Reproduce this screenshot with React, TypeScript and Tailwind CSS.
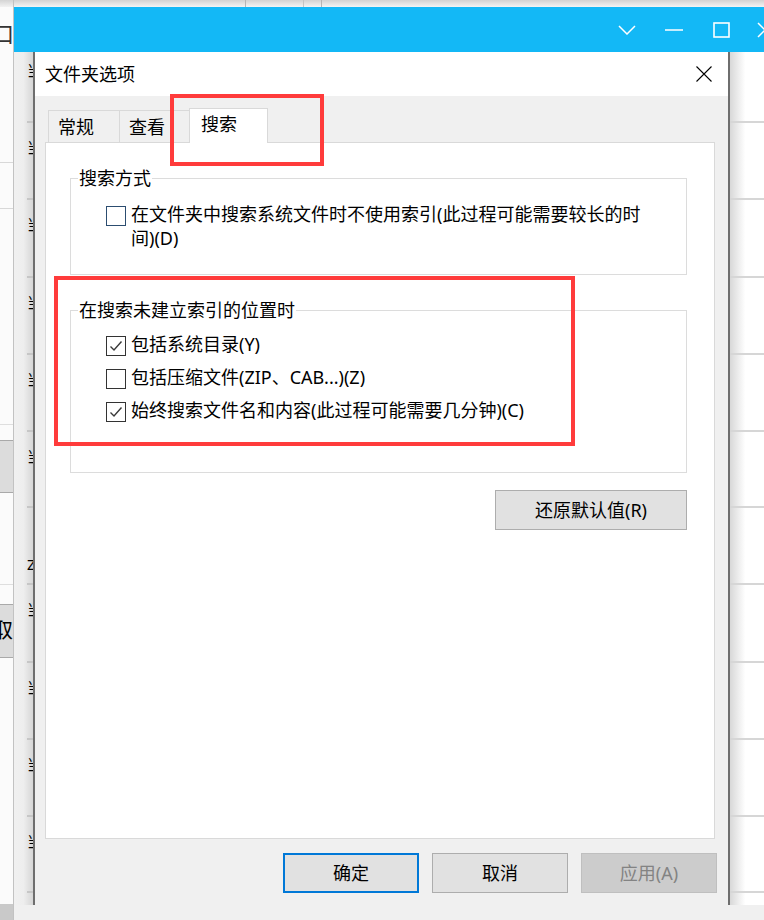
import React from "react";

// rows of the list window behind the dialog (first row is cut by the dialog title)
const listRows = [
  { h: "h-[71px]", text: "当", pad: "pt-[6px]" },
  { h: "h-[77px]", text: "当", pad: "pt-[12px]" },
  { h: "h-[78px]", text: "当", pad: "pt-[12px]" },
  { h: "h-[77px]", text: "当", pad: "pt-[12px]" },
  { h: "h-[77px]", text: "当", pad: "pt-[12px]" },
  { h: "h-[76px]", text: "当", pad: "pt-[12px]" },
  { h: "h-[77px]", text: "Z", pad: "pt-[44px]" },
  { h: "h-[78px]", text: "当", pad: "pt-[12px]" },
  { h: "h-[77px]", text: "当", pad: "pt-[12px]" },
  { h: "h-[77px]", text: "当", pad: "pt-[12px]" },
  { h: "h-[76px]", text: "当", pad: "pt-[12px]" },
];

const Checkbox: React.FC<{ checked?: boolean; focus?: boolean }> = ({ checked, focus }) => (
  <span
    className={`mt-[4px] flex h-[20px] w-[20px] shrink-0 items-center justify-center border bg-white ${
      focus ? "border-[#2c4d70]" : "border-[#333333]"
    }`}
  >
    {checked && (
      <svg width="18" height="18" viewBox="0 0 18 18">
        <path d="M3.5 9.5 L7 13 L14.5 4.5" fill="none" stroke="#3a3a3a" strokeWidth="1.4" />
      </svg>
    )}
  </span>
);

const CheckRow: React.FC<{ checked?: boolean; focus?: boolean; children: React.ReactNode }> = ({
  checked,
  focus,
  children,
}) => (
  <div className="ml-[28px] flex items-start gap-[5px]">
    <Checkbox checked={checked} focus={focus} />
    <span className="leading-[24px]">{children}</span>
  </div>
);

const LeftWindow = () => (
  <div className="flex h-[920px] w-[14px] shrink-0 flex-col overflow-hidden border-r border-[#c2c2c2] bg-[#fbfbfb]">
    <div className="h-[7px] bg-linear-to-b from-[#d4d4d4] to-[#f2f2f2]" />
    <div className="h-[13px]" />
    <div className="-ml-[8px] h-[26px] text-[22px] leading-[26px] text-[#333]">口</div>
    <div className="h-[117px] border-b border-[#d8d8d8]" />
    <div className="h-[46px] border-b border-[#d8d8d8]" />
    <div className="h-[216px] border-b border-[#dedede]" />
    <div className="h-[15px]" />
    <div className="h-[53px] border-y border-[#a9a9a9] bg-[#dcdcdc]" />
    <div className="h-[92px] border-b border-[#dedede]" />
    <div className="h-[19px]" />
    <div className="-ml-[8px] h-[54px] overflow-hidden border-y border-[#a9a9a9] bg-[#dcdcdc] pt-[11px] text-[21px] leading-[26px] text-black">
      取
    </div>
    <div className="h-[246px]" />
    <div className="flex-1 bg-[#c9c9c9]" />
  </div>
);

const TitleBar = () => (
  <div className="flex h-[45px] shrink-0 items-center overflow-hidden bg-[#13b8f6] pl-[604px]">
    <svg width="18" height="10" viewBox="0 0 18 10" className="shrink-0">
      <path d="M1 1 L9 9 L17 1" fill="none" stroke="white" strokeWidth="1.5" />
    </svg>
    <svg width="18" height="4" viewBox="0 0 18 4" className="ml-[29px] shrink-0">
      <path d="M0 2 H18" stroke="white" strokeWidth="1.5" />
    </svg>
    <svg width="17" height="16" viewBox="0 0 17 16" className="ml-[30px] shrink-0">
      <rect x="1" y="1" width="15" height="14" fill="none" stroke="white" strokeWidth="1.6" />
    </svg>
    <svg width="16" height="16" viewBox="0 0 16 16" className="ml-[27px] shrink-0">
      <path d="M1 1 L15 15 M15 1 L1 15" stroke="white" strokeWidth="1.5" />
    </svg>
  </div>
);

const ListLeft = () => (
  <div className="flex w-[19px] shrink-0 flex-col overflow-hidden bg-linear-to-r from-[#f0f0f0] via-[#eeeeee] to-[#d6d6d6]">
    {listRows.map((row, i) => (
      <div key={i} className={`${row.h} ${row.pad} relative shrink-0 border-b border-transparent`}>
        <div className="ml-[13px] w-[20px] text-[15px] leading-[24px] text-black">{row.text}</div>
        <div className="absolute right-0 bottom-[-1px] h-[2px] w-[6px] bg-[#c6c6c6]" />
      </div>
    ))}
  </div>
);

const ListRight = () => (
  <div className="flex w-[34px] shrink-0 flex-col bg-linear-to-r from-[#d8d8d8] via-white via-45% to-white">
    {listRows.map((row, i) => (
      <div key={i} className={`${row.h} shrink-0 border-b-2 border-[#d6d6d6]`} />
    ))}
  </div>
);

const Tab: React.FC<{ label: string; active?: boolean; width: string; first?: boolean }> = ({
  label,
  active,
  width,
  first,
}) =>
  active ? (
    <div
      className={`${width} relative z-10 -mb-px -ml-px h-[35px] border border-b-0 border-[#d9d9d9] bg-white pt-[3px] pl-[11px] leading-[24px]`}
    >
      {label}
    </div>
  ) : (
    <div
      className={`${width} ${first ? "" : "-ml-px"} h-[32px] border border-b-0 border-[#d9d9d9] bg-[#f0f0f0] pt-[4px] pl-[9px] leading-[24px]`}
    >
      {label}
    </div>
  );

const Button: React.FC<{ label: string; kind?: "default" | "normal" | "disabled"; width: string }> = ({
  label,
  kind = "normal",
  width,
}) => {
  const styles = {
    default: "border-2 border-[#0078d7] bg-[#e1e1e1] text-black",
    normal: "border border-[#adadad] bg-[#e1e1e1] text-black",
    disabled: "border border-[#bfbfbf] bg-[#cccccc] text-[#838383]",
  };
  return (
    <div className={`${width} ${styles[kind]} flex h-[40px] shrink-0 items-center justify-center leading-[24px]`}>
      {label}
    </div>
  );
};

const FolderOptionsDialog = () => (
  <div className="flex w-[693px] shrink-0 flex-col bg-[#f0f0f0]">
    {/* title */}
    <div className="flex h-[44px] shrink-0 items-center justify-between bg-white pr-[16px] pl-[10px]">
      <span className="leading-[24px]">文件夹选项</span>
      <svg width="16" height="16" viewBox="0 0 16 16">
        <path d="M0.5 0.5 L15.5 15.5 M15.5 0.5 L0.5 15.5" stroke="#000" strokeWidth="1.1" />
      </svg>
    </div>

    {/* tabs */}
    <div className="flex h-[34px] items-end pt-[12px] pl-[13px] box-content">
      <Tab label="常规" width="w-[72px]" first />
      <Tab label="查看" width="w-[71px]" />
      <Tab label="搜索" width="w-[79px]" active />
    </div>

    {/* tab panel */}
    <div className="ml-[10px] h-[697px] w-[670px] border border-[#d9d9d9] bg-white pt-[23px] pl-[24px]">
      <fieldset className="w-[617px] border border-[#dcdcdc] pt-[12px] pb-[24px] pl-[7px]">
        <legend className="px-[1px] leading-[24px]">搜索方式</legend>
        <CheckRow focus>
          在文件夹中搜索系统文件时不使用索引(此过程可能需要较长的时
          <br />
          间)(D)
        </CheckRow>
      </fieldset>

      <fieldset className="mt-[23px] w-[617px] border border-[#dcdcdc] pt-[10px] pb-[50px] pl-[7px]">
        <legend className="px-[1px] leading-[24px]">在搜索未建立索引的位置时</legend>
        <div className="flex flex-col gap-[9px]">
          <CheckRow checked>包括系统目录(Y)</CheckRow>
          <CheckRow>包括压缩文件(ZIP、CAB...)(Z)</CheckRow>
          <CheckRow checked>始终搜索文件名和内容(此过程可能需要几分钟)(C)</CheckRow>
        </div>
      </fieldset>

      <div className="mt-[17px] flex w-[617px] justify-end">
        <Button label="还原默认值(R)" width="w-[192px]" />
      </div>
    </div>

    {/* dialog buttons */}
    <div className="mt-[14px] flex justify-end gap-[13px] pr-[11px]">
      <Button label="确定" kind="default" width="w-[136px]" />
      <Button label="取消" width="w-[136px]" />
      <Button label="应用(A)" kind="disabled" width="w-[136px]" />
    </div>
  </div>
);

const App: React.FC = () => {
  return (
    <div className="relative flex h-[920px] w-[764px] overflow-hidden bg-[#f0f0f0] font-['Noto_Sans','Noto_Sans_CJK_SC',sans-serif] text-[18px] text-black">
      <LeftWindow />
      <div className="flex w-[750px] flex-col">
        <div className="flex h-[7px] shrink-0 bg-linear-to-b from-[#d2d2d2] to-[#f4f4f4]">
          <div className="w-[231px]" />
          <div className="w-px bg-[#b5b5b5]" />
          <div className="w-[57px]" />
          <div className="w-px bg-[#c4c4c4]" />
          <div className="w-[17px]" />
          <div className="w-px bg-[#b5b5b5]" />
        </div>
        <TitleBar />
        <div className="flex h-[853px] shrink-0">
          <ListLeft />
          <div className="w-[2px] shrink-0 bg-[#6e6e6e]" />
          <FolderOptionsDialog />
          <div className="w-[2px] shrink-0 bg-[#6e6e6e]" />
          <ListRight />
        </div>
      </div>

      {/* red annotation boxes */}
      <div className="absolute top-[94px] left-[170px] h-[72px] w-[154px] border-4 border-[#ff3b3b]" />
      <div className="absolute top-[276px] left-[54px] h-[170px] w-[521px] border-4 border-[#ff3b3b]" />
    </div>
  );
};

export default App;
